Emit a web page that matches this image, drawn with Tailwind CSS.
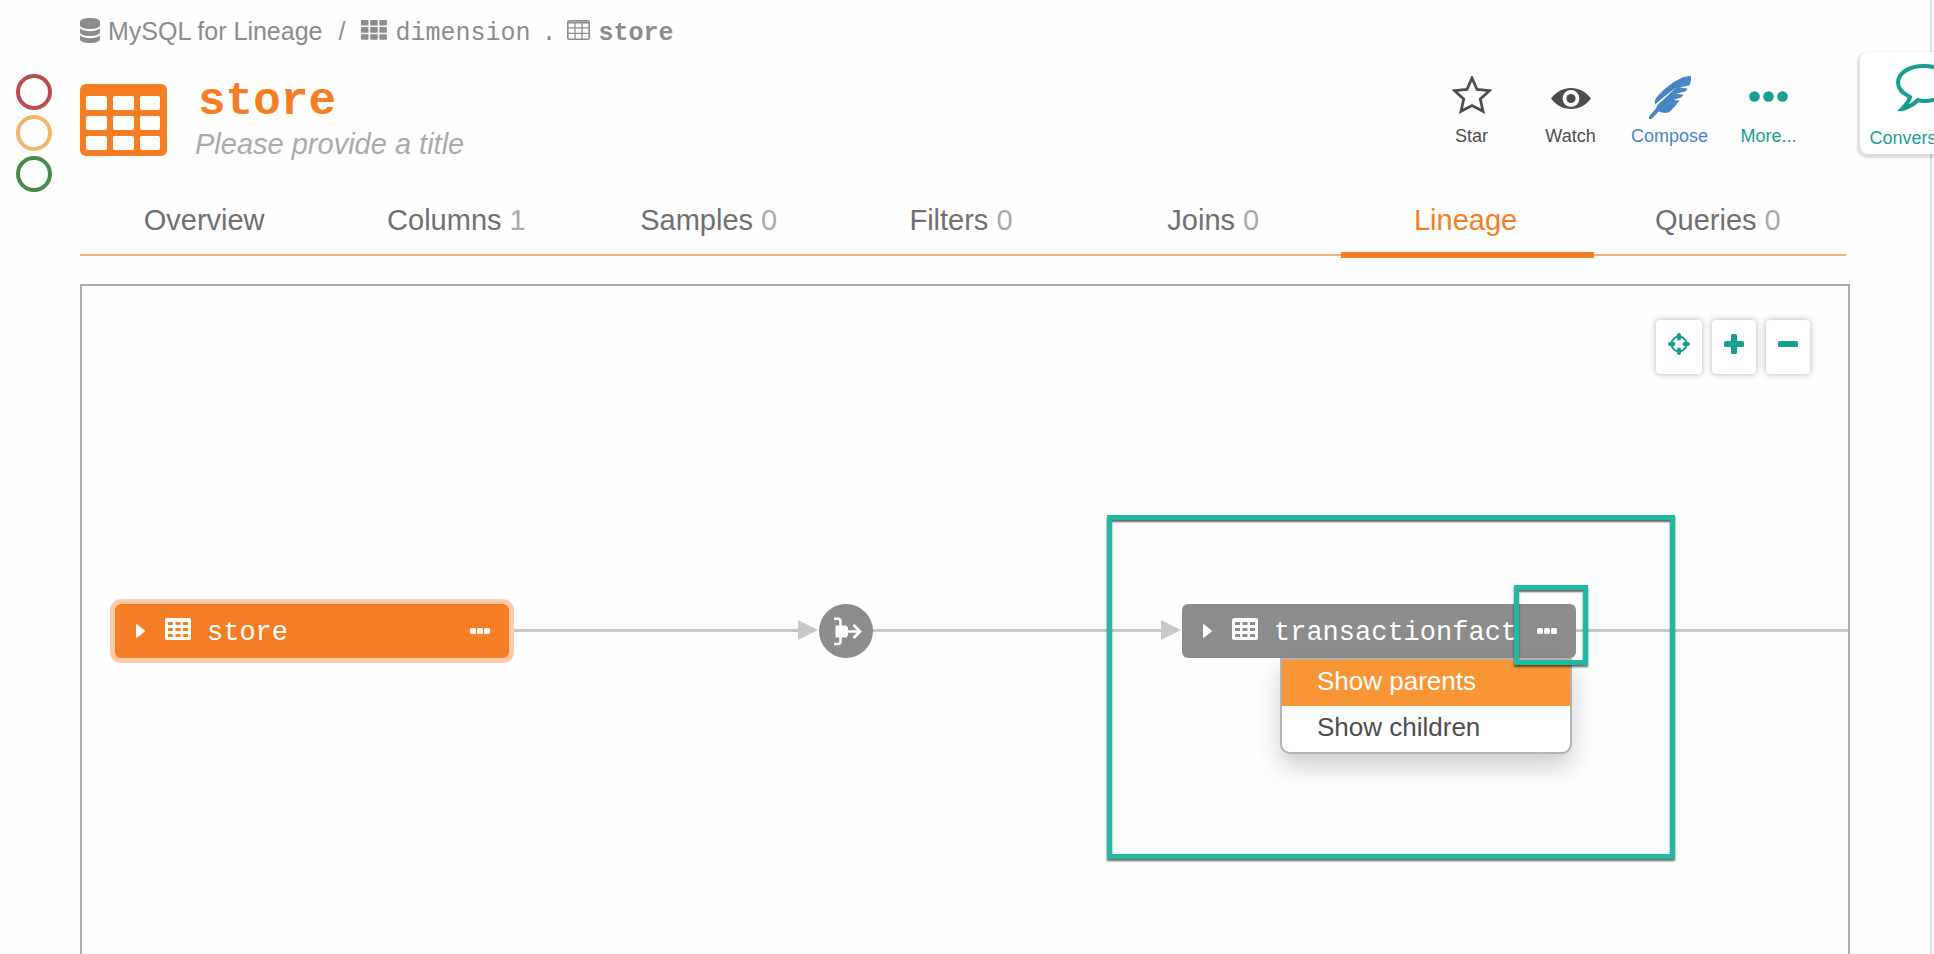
<!DOCTYPE html>
<html lang="en">
<head>
<meta charset="utf-8">
<title>store - Lineage</title>
<script src="https://cdn.jsdelivr.net/npm/@tailwindcss/browser@4"></script>
</head>
<body class="relative flex h-screen overflow-hidden bg-[#fefefe] font-['Liberation_Sans',Arial,sans-serif] text-[#707070]">

<svg class="hidden" aria-hidden="true">
  <symbol id="table-solid" viewBox="0 0 26 22">
    <path fill-rule="evenodd" fill="currentColor" d="M2 0H24Q26 0 26 2V20Q26 22 24 22H2Q0 22 0 20V2Q0 0 2 0ZM3 4V7H8V4ZM10.500 4V7H15.500V4ZM18 4V7H23V4ZM3 10V13H8V10ZM10.500 10V13H15.500V10ZM18 10V13H23V10ZM3 16V19H8V16ZM10.500 16V19H15.500V16ZM18 16V19H23V16Z"/>
  </symbol>
  <symbol id="dots" viewBox="0 0 20 6">
    <g fill="currentColor"><rect width="6" height="6" rx="1.500"/><rect x="7" width="6" height="6" rx="1.500"/><rect x="14" width="6" height="6" rx="1.500"/></g>
  </symbol>
  <symbol id="caret" viewBox="0 0 9 14">
    <path fill="currentColor" d="M0 1Q0 0 1 .3L8.500 6.300Q9 7 8.500 7.700L1 13.700Q0 14 0 13Z"/>
  </symbol>
</svg>

<aside class="flex w-20 shrink-0 flex-col gap-[5px] pt-[74px] pl-4" aria-label="Trust flags">
  <button aria-label="Deprecate" class="size-9 rounded-full border-4 border-[#b84b4b]"></button>
  <button aria-label="Warn" class="size-9 rounded-full border-4 border-[#f0b66f]"></button>
  <button aria-label="Endorse" class="size-9 rounded-full border-4 border-[#488a48]"></button>
</aside>

<main class="mr-0.5 flex min-w-0 flex-1 flex-col border-r-2 border-[#dedede] pt-[15px] pr-20">
  <nav class="flex h-8 items-start text-[25px] leading-8 text-[#8c8c8c]" aria-label="Breadcrumb">
    <a href="#" class="flex gap-2">
      <svg class="mt-[3px] h-[25px] w-5" viewBox="0 0 20 25" fill="#8c8c8c" aria-hidden="true">
        <path d="M0 4C0 1.500 4 0 10 0S20 1.500 20 4V7C20 9.500 16 11 10 11S0 9.500 0 7Z"/>
        <path d="M0 10.500C3 12.500 6 13.200 10 13.200S17 12.500 20 10.500V14C20 16.500 16 18 10 18S0 16.500 0 14Z"/>
        <path d="M0 17.500C3 19.500 6 20.200 10 20.200S17 19.500 20 17.500V21C20 23.500 16 25 10 25S0 23.500 0 21Z"/>
      </svg>
      <span>MySQL for Lineage</span>
    </a>
    <span class="mx-4">/</span>
    <a href="#" class="flex gap-2">
      <svg class="mt-[5px] h-5 w-[26px]" viewBox="0 0 26 20" fill="#8c8c8c" aria-hidden="true">
        <g id="r"><rect width="7.500" height="5.600" rx="1"/><rect x="9.200" width="7.500" height="5.600" rx="1"/><rect x="18.400" width="7.500" height="5.600" rx="1"/></g>
        <use href="#r" y="7.100"/><use href="#r" y="14.200"/>
      </svg>
      <span class="font-['Liberation_Mono',monospace] leading-[38px]">dimension</span>
    </a>
    <span class="mx-[11px] font-['Liberation_Mono',monospace] leading-[38px]">.</span>
    <a href="#" class="flex gap-2">
      <svg class="mt-[5px] h-5 w-[23px]" viewBox="0 0 23 20" fill="none" stroke="#8c8c8c" aria-hidden="true">
        <rect x=".8" y=".8" width="21.400" height="18.400" rx="1.500" stroke-width="1.600"/>
        <path stroke-width="2" d="M1 2.500H22"/><path stroke-width="1.300" d="M1 7.800H22M1 13.300H22M8 3V19M15 3V19"/>
      </svg>
      <span class="font-['Liberation_Mono',monospace] leading-[38px] font-bold">store</span>
    </a>
  </nav>

  <header class="mt-[29px] flex items-start">
    <svg class="mt-2 h-[72px] w-[87px] shrink-0" viewBox="0 0 87 72" aria-hidden="true">
      <rect width="87" height="72" rx="6" fill="#f57d23"/>
      <g id="c" fill="#fff"><rect x="6" y="12" width="21" height="14" rx="2"/><rect x="33" y="12" width="21" height="14" rx="2"/><rect x="60" y="12" width="20" height="14" rx="2"/></g>
      <use href="#c" y="20"/><use href="#c" y="40"/>
    </svg>
    <div class="ml-7 min-w-0 flex-1">
      <h1 class="pl-[3px] font-['Liberation_Mono',monospace] text-[46px] leading-[52px] font-bold text-[#f57d23]">store</h1>
      <p class="text-[29px] leading-8 text-[#aaa] italic">Please provide a title</p>
    </div>
    <div class="mr-8 flex text-lg leading-6 text-[#4d4d4d]">
      <button class="flex w-[99px] flex-col items-center">
        <span class="flex h-12 items-start"><svg class="h-[39px] w-10" viewBox="0 1 40 39" fill="none" stroke="#4d4d4d" stroke-width="2.800" aria-hidden="true"><path d="M20 3L25 14.500L37.500 15.700L28.300 24L31 36.300L20 30.500L9 36.300L11.700 24L2.500 15.700L15 14.500Z"/></svg></span>
        Star</button>
      <button class="flex w-[99px] flex-col items-center">
        <span class="flex h-12 items-start pt-3"><svg class="h-[21px] w-10" viewBox="0 0 40 21" aria-hidden="true"><path fill="#4d4d4d" d="M0 10.500C5 4 12 0 20 0S35 4 40 10.500C35 17 28 21 20 21S5 17 0 10.500Z"/><circle cx="20" cy="10.500" r="8.400" fill="#fff"/><circle cx="20" cy="10.500" r="4.600" fill="#4d4d4d"/></svg></span>
        Watch</button>
      <button class="flex w-[99px] flex-col items-center text-[#4785c4]">
        <span class="flex h-12 items-start"><svg class="h-[43px] w-[42px]" viewBox="0 0 42 43" fill="#4785c4" aria-hidden="true">
          <path d="M42 0C38 0 35 1 32 2.200C28 4 25 6 22 8C18 11 15 13.500 12 16.500C8 20.500 5 23.500 6 28.500C12 23.500 19 17 27.500 11.500C20 18 14 24 8 29.500C8.500 31.500 4 36 0 40.500V43H2.500L10 35.300C14 37.500 19 37.500 21.500 35C25 31.500 28 28 30.500 24.500L24.500 24L32.500 21.300L34.500 18.700L27 17.800L37 15.300L38.500 12.500L30.500 11.500L40.500 9.300C42 6 42.300 3 42 0Z"/></svg></span>
        Compose</button>
      <button class="flex w-[99px] flex-col items-center text-[#189e90]">
        <span class="flex h-12 items-start pt-[15px]"><svg class="h-[11px] w-[39px]" viewBox="0 0 39 11" fill="#189e90" aria-hidden="true"><circle cx="5.500" cy="5.500" r="5.300"/><circle cx="19.500" cy="5.500" r="5.300"/><circle cx="33.500" cy="5.500" r="5.300"/></svg></span>
        More...</button>
    </div>
  </header>

  <nav class="mt-10 mr-1 grid grid-cols-7 border-b-2 border-[#f8ae79] text-center text-[29px] leading-10" aria-label="Sections">
    <a href="#" class="h-[54px] pr-1">Overview</a>
    <a href="#" class="h-[54px] pr-1">Columns <span class="text-[#aaa]">1</span></a>
    <a href="#" class="h-[54px] pr-1">Samples <span class="text-[#aaa]">0</span></a>
    <a href="#" class="h-[54px] pr-1">Filters <span class="text-[#aaa]">0</span></a>
    <a href="#" class="h-[54px] pr-1">Joins <span class="text-[#aaa]">0</span></a>
    <a href="#" class="relative h-[54px] pr-1 text-[#f57d23]" aria-current="page">Lineage<span class="absolute inset-x-0 -bottom-1 h-1.5 bg-[#f57d23]"></span></a>
    <a href="#" class="h-[54px] pr-1">Queries <span class="text-[#aaa]">0</span></a>
  </nav>

  <section class="relative mt-7 flex-1 border-2 border-b-0 border-[#aaa] bg-[#fefefe]" aria-label="Lineage graph">
    <div class="flex justify-end gap-2.5 pt-[34px] pr-[38px]">
      <button aria-label="Center" class="flex h-[54px] w-[46px] justify-center rounded-sm bg-white pt-[13px] shadow-[0_0_6px_rgba(0,0,0,0.3)]">
        <svg class="size-[22px]" viewBox="0 0 22 22" fill="none" stroke="#189e90" aria-hidden="true"><circle cx="11" cy="11" r="7.500" stroke-width="2"/><path stroke-width="4" stroke-linecap="round" d="M11 2V5.500M11 16.500V20M2 11H5.500M16.500 11H20"/></svg>
      </button>
      <button aria-label="Zoom in" class="flex h-[54px] w-11 justify-center rounded-sm bg-white pt-[14px] shadow-[0_0_6px_rgba(0,0,0,0.3)]">
        <svg class="size-5" viewBox="0 0 20 20" fill="#189e90" aria-hidden="true"><rect y="7" width="20" height="6" rx="1.500"/><rect x="7" width="6" height="20" rx="1.500"/></svg>
      </button>
      <button aria-label="Zoom out" class="flex h-[54px] w-11 justify-center rounded-sm bg-white pt-[14px] shadow-[0_0_6px_rgba(0,0,0,0.3)]">
        <svg class="size-5" viewBox="0 0 20 20" fill="#189e90" aria-hidden="true"><rect y="7" width="20" height="6" rx="1.500"/></svg>
      </button>
    </div>

    <!-- connector and arrowheads -->
    <div class="absolute top-[343px] right-0 left-[427px] h-[3px] bg-[#c8c8c8]"></div>
    <svg class="absolute top-[334px] left-[716px] h-5 w-[21px]" viewBox="0 0 21 20" aria-hidden="true"><rect width="21" height="20" fill="#fefefe"/><path fill="#c8c8c8" d="M0 0L20 10L0 20Z"/></svg>
    <svg class="absolute top-[334px] left-[1079px] h-5 w-[21px]" viewBox="0 0 21 20" aria-hidden="true"><rect width="21" height="20" fill="#fefefe"/><path fill="#c8c8c8" d="M0 0L20 10L0 20Z"/></svg>

    <div class="absolute top-[318px] left-[33px] flex h-[54px] w-[394px] items-center rounded-md bg-[#f57d23] pr-[19px] pl-[21px] text-white shadow-[0_0_0_5px_#f9cba8]">
      <button aria-label="Expand store"><svg class="h-3.5 w-[9px]"><use href="#caret"/></svg></button>
      <svg class="mb-1 ml-5 h-[22px] w-[26px]" aria-hidden="true"><use href="#table-solid"/></svg>
      <a href="#" class="ml-4 flex-1 pt-1 font-['Liberation_Mono',monospace] text-[27px] leading-8">store</a>
      <button aria-label="store options"><svg class="h-1.5 w-5"><use href="#dots"/></svg></button>
    </div>

    <div class="absolute top-[318px] left-[737px] size-[54px] rounded-full bg-[#8c8c8c]">
      <svg class="size-full" viewBox="0 0 54 54" fill="none" stroke="#fff" aria-hidden="true">
        <path stroke-width="2.600" d="M15 14.800H19Q21.500 14.800 21.500 17.500V23M15 40H19Q21.500 40 21.500 37.500V32M28 27.500H41"/>
        <path fill="#fff" stroke="none" d="M16.500 21.500H28V23H29V32H28V33.500H16.500Z"/>
        <path stroke-width="2.800" d="M34.500 21L41 27.500L34.500 34"/>
      </svg>
    </div>

    <div class="absolute top-[318px] left-[1100px] flex h-[54px] w-[394px] items-center rounded-md bg-[#8c8c8c] pr-[19px] pl-[21px] text-white">
      <button aria-label="Expand transactionfact"><svg class="h-3.5 w-[9px]"><use href="#caret"/></svg></button>
      <svg class="mb-1 ml-5 h-[22px] w-[26px] shrink-0" aria-hidden="true"><use href="#table-solid"/></svg>
      <a href="#" class="ml-4 flex-1 pt-1 font-['Liberation_Mono',monospace] text-[27px] leading-8">transactionfact</a>
      <button aria-label="transactionfact options"><svg class="h-1.5 w-5"><use href="#dots"/></svg></button>
    </div>

    <div class="absolute top-[372px] left-[1198px] flex w-[292px] flex-col overflow-hidden rounded-b-[10px] border-2 border-[#b3b3b3] bg-white text-[26px] leading-[42px] text-[#4d4d4d] shadow-[0_12px_24px_rgba(0,0,0,0.2)]">
      <button class="bg-[#f89636] pb-1 pl-[35px] text-left text-white">Show parents</button>
      <button class="pb-1 pl-[35px] text-left">Show children</button>
    </div>

    <!-- callout frames -->
    <div class="pointer-events-none absolute top-[229px] left-[1025px] h-[344px] w-[568px] border-[5px] border-[#1fbaa2] shadow-[0_2px_2px_rgba(0,0,0,0.6),inset_0_2px_2px_rgba(0,0,0,0.6)]"></div>
    <div class="pointer-events-none absolute top-[299px] left-[1432px] h-20 w-[74px] border-[5px] border-[#1fbaa2] shadow-[0_2px_2px_rgba(0,0,0,0.6),inset_0_2px_2px_rgba(0,0,0,0.6)]"></div>
  </section>
</main>

<!-- drawer tab that hangs off the right edge -->
<button class="absolute top-[52px] -right-[60px] flex h-[102px] w-[134px] flex-col items-center rounded-lg bg-white pt-3 text-lg leading-6 text-[#189e90] shadow-[-1px_2px_2px_2px_rgba(0,0,0,0.13)]">
  <svg class="mb-[15px] h-[47px] w-[62px] shrink-0" viewBox="0 0 62 47" fill="none" stroke="#189e90" stroke-width="4" aria-hidden="true"><path d="M14 33C6 29 2 24 2 19C2 9 13 2 28 2S54 9 54 19S43 37 28 37C26 37 24 37 22 36C17 41 12 43.500 6 45C9 42 13 38 14 33Z"/></svg>
  Conversations
</button>
</body>
</html>
